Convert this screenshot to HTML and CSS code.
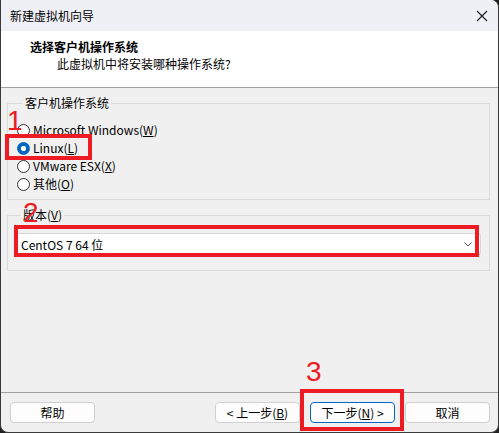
FILE: index.html
```html
<!DOCTYPE html>
<html lang="zh-CN">
<head>
<meta charset="utf-8">
<link rel="stylesheet" href="styles.css">
</head>
<body>
<div class="win">
  <div class="titlebar">
    <span class="title">新建虚拟机向导</span>
    <svg class="close" width="12" height="12" viewBox="0 0 12 12"><path d="M1 1 L11 11 M11 1 L1 11" stroke="#1a1a1a" stroke-width="1.1" fill="none"/></svg>
  </div>
  <div class="header">
    <div class="h-title">选择客户机操作系统</div>
    <div class="h-sub">此虚拟机中将安装哪种操作系统?</div>
  </div>
  <div class="content">
    <fieldset class="group g1">
      <legend>客户机操作系统</legend>
      <div class="radio"><span class="dot"></span>Microsoft Windows(<u>W</u>)</div>
      <div class="radio"><span class="dot on"></span>Linux(<u>L</u>)</div>
      <div class="radio"><span class="dot"></span>VMware ESX(<u>X</u>)</div>
      <div class="radio"><span class="dot"></span>其他(<u>O</u>)</div>
    </fieldset>
    <fieldset class="group g2">
      <legend>版本(<u>V</u>)</legend>
      <div class="combo">
        <span>CentOS 7 64 位</span>
        <svg class="chev" width="8" height="5" viewBox="0 0 8 5"><path d="M0.5 0.5 L4 4 L7.5 0.5" stroke="#555" stroke-width="1" fill="none"/></svg>
      </div>
    </fieldset>
  </div>
  <div class="footer">
    <button class="btn">帮助</button>
    <div class="spacer"></div>
    <button class="btn">&lt; 上一步(<u>B</u>)</button>
    <button class="btn primary">下一步(<u>N</u>) &gt;</button>
    <button class="btn">取消</button>
  </div>

  <div class="mark m1"></div>
  <div class="num n1">1</div>
  <div class="mark m2"></div>
  <div class="num n2">2</div>
  <div class="mark m3"></div>
  <div class="num n3">3</div>
</div>
</body>
</html>
```
FILE: styles.css
```css
html, body {
  margin: 0;
  padding: 0;
  background: #202020;
}
.win {
  position: relative;
  width: 499px;
  height: 433px;
  box-sizing: border-box;
  border: 1px solid #3a3a3a;
  border-top: none;
  border-radius: 0 8px 8px 8px;
  overflow: hidden;
  background: #f0f0f0;
  font-family: "Noto Sans CJK SC", "Noto Sans", sans-serif;
  font-size: 12px;
  color: #000;
  display: flex;
  flex-direction: column;
}
.titlebar {
  height: 31px;
  flex: none;
  background: #eff0f6;
  display: flex;
  align-items: center;
  padding: 0 8px 0 9px;
}
.title {
  flex: 1;
  font-size: 12px;
  line-height: 16px;
}
.close {
  margin-right: 2px;
}
.header {
  flex: none;
  background: #fff;
  border-bottom: 1px solid #a0a0a0;
  box-sizing: border-box;
  height: 57px;
  padding-top: 7px;
}
.h-title {
  font-weight: bold;
  padding-left: 29px;
  line-height: 17px;
}
.h-sub {
  padding-left: 56px;
  line-height: 17px;
}
.content {
  flex: 1;
  padding: 0 8px 0 6px;
}
.group {
  margin: 0;
  border: 1px solid #dcdcdc;
  padding: 0;
  min-width: 0;
}
.group legend {
  padding: 0 2px;
  margin-left: 6px;
  line-height: 16px;
}
.g1 {
  margin-top: 7px;
  height: 105px;
  box-sizing: border-box;
  padding: 10px 0 0 9px;
}
.radio {
  height: 18px;
  display: flex;
  align-items: center;
  line-height: 16px;
}
.dot {
  width: 11px;
  height: 11px;
  border: 1px solid #333;
  border-radius: 50%;
  box-sizing: content-box;
  margin-right: 3px;
  background: #fff;
}
.dot.on {
  border-color: #0067c0;
  background: radial-gradient(circle, #fff 0 2.4px, #0067c0 3px);
}
.g2 {
  margin-top: 7px;
  height: 64px;
  box-sizing: border-box;
  padding: 10px 8px 0 7px;
}
.combo {
  height: 22px;
  box-sizing: border-box;
  background: #fff;
  border: 1px solid #d6d6d6;
  border-bottom-color: #8a8a8a;
  border-radius: 3px;
  display: flex;
  align-items: center;
  padding: 0 8px 0 5px;
}
.combo span {
  flex: 1;
}
.footer {
  height: 40px;
  flex: none;
  box-sizing: border-box;
  border-top: 1px solid #a0a0a0;
  display: flex;
  align-items: center;
  padding: 0 8px 0 9px;
  gap: 10px;
}
.spacer {
  flex: 1;
}
.btn {
  width: 85px;
  height: 21px;
  box-sizing: border-box;
  border: 1px solid #d0d0d0;
  border-radius: 4px;
  background: #fdfdfd;
  font-family: inherit;
  font-size: 12px;
  color: #000;
  padding: 0;
  line-height: 18px;
}
.btn.primary {
  border-color: #0067c0;
}
.mark {
  position: absolute;
  border: 4px solid #ed1c24;
  box-sizing: border-box;
}
.m1 { left: 4px; top: 134px; width: 87px; height: 26px; }
.m2 { left: 13px; top: 225px; width: 465px; height: 32px; }
.m3 { left: 299px; top: 389px; width: 104px; height: 42px; }
.num {
  position: absolute;
  color: #ed1c24;
  font-family: "Liberation Sans", sans-serif;
  font-size: 28px;
  line-height: 28px;
}
.n1 { left: 6px; top: 107px; }
.n2 { left: 22px; top: 199px; }
.n3 { left: 305px; top: 358px; }
```
